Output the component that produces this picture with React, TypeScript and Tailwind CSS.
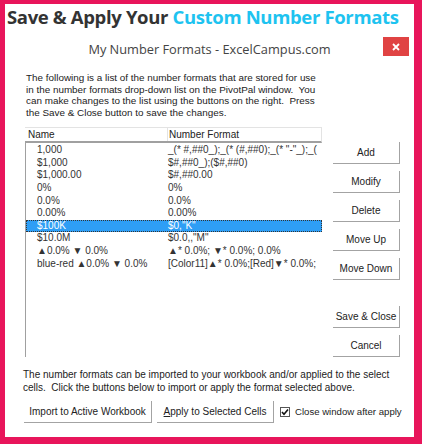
import React from "react";

const rows = [
  { name: "1,000", format: '_(* #,##0_);_(* (#,##0);_(* "-"_);_(' },
  { name: "$1,000", format: "$#,##0_);($#,##0)" },
  { name: "$1,000.00", format: "$#,##0.00" },
  { name: "0%", format: "0%" },
  { name: "0.0%", format: "0.0%" },
  { name: "0.00%", format: "0.00%" },
  { name: "$100K", format: '$0,"K"', selected: true },
  { name: "$10.0M", format: '$0.0,,"M"' },
  { name: "▲0.0% ▼ 0.0%", format: "▲* 0.0%; ▼* 0.0%; 0.0%" },
  { name: "blue-red ▲0.0% ▼ 0.0%", format: "[Color11]▲* 0.0%;[Red]▼* 0.0%;" },
];

function WinButton({ children, className = "" }: { children: React.ReactNode; className?: string }) {
  return (
    <button
      className={`flex h-[22px] items-center justify-center border-r border-b border-[#a3a3a3] bg-white text-[10px] text-[#222] ${className}`}
    >
      {children}
    </button>
  );
}

export default function App() {
  return (
    <div className="h-[444px] w-[422px] bg-[#e8155b] pt-[4px] pr-[8px] pb-[7px] pl-[5px]">
      <div
        className="relative flex h-full flex-col bg-white text-[#222]"
        style={{ fontFamily: '"Liberation Sans", Arial, sans-serif' }}
      >
        <h1
          className="pl-[2px] text-[18.5px] leading-[26px] font-bold tracking-[-0.35px] whitespace-nowrap text-[#333]"
          style={{ fontFamily: '"Open Sans", sans-serif' }}
        >
          Save &amp; Apply Your <span className="text-[#1ec3f0]">Custom Number Formats</span>
        </h1>

        <div className="relative mt-[4px] h-[30px]">
          <div
            className="text-center text-[12.8px] leading-[30px] text-[#444]"
            style={{ fontFamily: '"Open Sans", sans-serif' }}
          >
            My Number Formats - ExcelCampus.com
          </div>
          <div className="absolute top-[3px] right-[5px] flex h-[19px] w-[26px] items-center justify-center bg-[#e04343]">
            <svg width="8" height="8" viewBox="0 0 8 8">
              <path d="M1 1 L7 7 M7 1 L1 7" stroke="white" strokeWidth="1.8" />
            </svg>
          </div>
        </div>

        <p className="mt-[8px] ml-[21px] text-[9.9px] leading-[11.5px] whitespace-pre">
          {"The following is a list of the number formats that are stored for use\nin the number formats drop-down list on the PivotPal window.  You\ncan make changes to the list using the buttons on the right.  Press\nthe Save & Close button to save the changes."}
        </p>

        <div className="mt-[9px] flex">
          <div className="ml-[20px] flex h-[230px] w-[297px] flex-col">
            <div className="flex h-[16px] items-center border-t border-r border-b-2 border-[#e3e3e3] border-b-[#a0a0a0] text-[10px]">
              <div className="w-[142px] pl-[3px]">Name</div>
              <div className="h-full border-l border-[#e3e3e3] pl-[1px] leading-[14px]">Number Format</div>
            </div>
            <div className="flex-1 border-l border-[#a0a0a0] pt-[1px]">
              {rows.map((r) => (
                <div
                  key={r.name}
                  className={`flex h-[12.6px] items-center overflow-hidden text-[10px] leading-[12px] whitespace-nowrap ${
                    r.selected
                      ? "border border-dotted border-[#333] bg-[#2e9ef5] text-white"
                      : "border border-transparent text-[#333]"
                  }`}
                >
                  <div className="w-[141px] shrink-0 pl-[10px]">{r.name}</div>
                  <div>{r.format}</div>
                </div>
              ))}
            </div>
          </div>

          <div className="ml-[11px] flex w-[67px] flex-col pt-[15px]">
            <div className="flex flex-col gap-[7px]">
              <WinButton>Add</WinButton>
              <WinButton>Modify</WinButton>
              <WinButton>Delete</WinButton>
              <WinButton>Move Up</WinButton>
              <WinButton>Move Down</WinButton>
            </div>
            <div className="mt-[26px] flex flex-col gap-[7px]">
              <WinButton>Save &amp; Close</WinButton>
              <WinButton>Cancel</WinButton>
            </div>
          </div>
        </div>

        <p className="mt-[11px] ml-[18px] text-[10px] leading-[13px] whitespace-pre">
          {"The number formats can be imported to your workbook and/or applied to the select\ncells.  Click the buttons below to import or apply the format selected above."}
        </p>

        <div className="mt-[7px] ml-[19px] flex items-center">
          <WinButton className="w-[128px]">Import to Active Workbook</WinButton>
          <WinButton className="ml-[5px] w-[117px]">
            <span>
              <span className="underline">A</span>pply to Selected Cells
            </span>
          </WinButton>
          <div className="ml-[6px] flex items-center">
            <div className="flex h-[10px] w-[10px] items-center justify-center border border-[#555] bg-white">
              <svg width="8" height="8" viewBox="0 0 8 8">
                <path d="M1 4 L3 6.3 L7 1.5" stroke="#111" strokeWidth="1.6" fill="none" />
              </svg>
            </div>
            <span className="ml-[5px] text-[9.6px] whitespace-nowrap">Close window after apply</span>
          </div>
        </div>
      </div>
    </div>
  );
}
